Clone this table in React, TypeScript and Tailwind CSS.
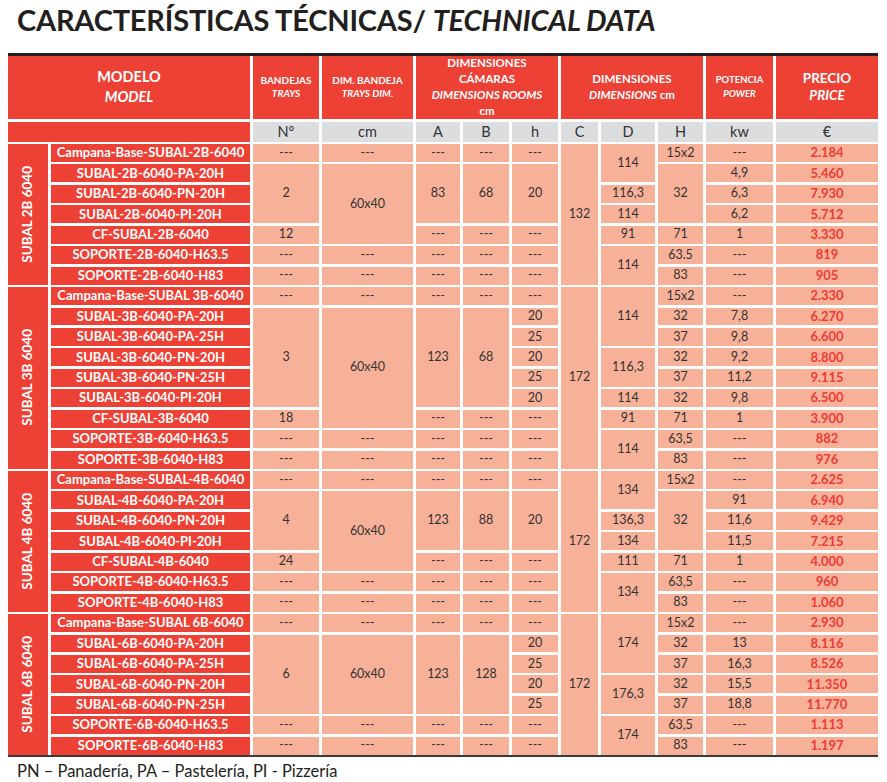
type Cell = string | [string, number]
type Row = { model: string; cells: Cell[]; price: string }
type Group = { label: string; rows: Row[] }

const d = '---'
const dash5: Cell[] = [d, d, d, d, d]

const groups: Group[] = [
  {
    label: 'SUBAL 2B 6040',
    rows: [
      { model: 'Campana-Base-SUBAL-2B-6040', cells: [...dash5, ['132', 7], ['114', 2], '15x2', d], price: '2.184' },
      { model: 'SUBAL-2B-6040-PA-20H', cells: [['2', 3], ['60x40', 4], ['83', 3], ['68', 3], ['20', 3], ['32', 3], '4,9'], price: '5.460' },
      { model: 'SUBAL-2B-6040-PN-20H', cells: ['116,3', '6,3'], price: '7.930' },
      { model: 'SUBAL-2B-6040-PI-20H', cells: ['114', '6,2'], price: '5.712' },
      { model: 'CF-SUBAL-2B-6040', cells: ['12', d, d, d, '91', '71', '1'], price: '3.330' },
      { model: 'SOPORTE-2B-6040-H63.5', cells: [...dash5, ['114', 2], '63.5', d], price: '819' },
      { model: 'SOPORTE-2B-6040-H83', cells: [...dash5, '83', d], price: '905' },
    ],
  },
  {
    label: 'SUBAL 3B 6040',
    rows: [
      { model: 'Campana-Base-SUBAL 3B-6040', cells: [...dash5, ['172', 9], ['114', 3], '15x2', d], price: '2.330' },
      { model: 'SUBAL-3B-6040-PA-20H', cells: [['3', 5], ['60x40', 6], ['123', 5], ['68', 5], '20', '32', '7,8'], price: '6.270' },
      { model: 'SUBAL-3B-6040-PA-25H', cells: ['25', '37', '9,8'], price: '6.600' },
      { model: 'SUBAL-3B-6040-PN-20H', cells: ['20', ['116,3', 2], '32', '9,2'], price: '8.800' },
      { model: 'SUBAL-3B-6040-PN-25H', cells: ['25', '37', '11,2'], price: '9.115' },
      { model: 'SUBAL-3B-6040-PI-20H', cells: ['20', '114', '32', '9,8'], price: '6.500' },
      { model: 'CF-SUBAL-3B-6040', cells: ['18', d, d, d, '91', '71', '1'], price: '3.900' },
      { model: 'SOPORTE-3B-6040-H63.5', cells: [...dash5, ['114', 2], '63,5', d], price: '882' },
      { model: 'SOPORTE-3B-6040-H83', cells: [...dash5, '83', d], price: '976' },
    ],
  },
  {
    label: 'SUBAL 4B 6040',
    rows: [
      { model: 'Campana-Base-SUBAL-4B-6040', cells: [...dash5, ['172', 7], ['134', 2], '15x2', d], price: '2.625' },
      { model: 'SUBAL-4B-6040-PA-20H', cells: [['4', 3], ['60x40', 4], ['123', 3], ['88', 3], ['20', 3], ['32', 3], '91'], price: '6.940' },
      { model: 'SUBAL-4B-6040-PN-20H', cells: ['136,3', '11,6'], price: '9.429' },
      { model: 'SUBAL-4B-6040-PI-20H', cells: ['134', '11,5'], price: '7.215' },
      { model: 'CF-SUBAL-4B-6040', cells: ['24', d, d, d, '111', '71', '1'], price: '4.000' },
      { model: 'SOPORTE-4B-6040-H63.5', cells: [...dash5, ['134', 2], '63,5', d], price: '960' },
      { model: 'SOPORTE-4B-6040-H83', cells: [...dash5, '83', d], price: '1.060' },
    ],
  },
  {
    label: 'SUBAL 6B 6040',
    rows: [
      { model: 'Campana-Base-SUBAL 6B-6040', cells: [...dash5, ['172', 7], ['174', 3], '15x2', d], price: '2.930' },
      { model: 'SUBAL-6B-6040-PA-20H', cells: [['6', 4], ['60x40', 4], ['123', 4], ['128', 4], '20', '32', '13'], price: '8.116' },
      { model: 'SUBAL-6B-6040-PA-25H', cells: ['25', '37', '16,3'], price: '8.526' },
      { model: 'SUBAL-6B-6040-PN-20H', cells: ['20', ['176,3', 2], '32', '15,5'], price: '11.350' },
      { model: 'SUBAL-6B-6040-PN-25H', cells: ['25', '37', '18,8'], price: '11.770' },
      { model: 'SOPORTE-6B-6040-H63.5', cells: [...dash5, ['174', 2], '63,5', d], price: '1.113' },
      { model: 'SOPORTE-6B-6040-H83', cells: [...dash5, '83', d], price: '1.197' },
    ],
  },
]

const span: Record<number, string> = {
  1: '',
  2: 'row-span-2',
  3: 'row-span-3',
  4: 'row-span-4',
  5: 'row-span-5',
  6: 'row-span-6',
  7: 'row-span-7',
  9: 'row-span-9',
}

const red = 'bg-[#ee4136] text-white font-bold'
const units = ['Nº', 'cm', 'A', 'B', 'h', 'C', 'D', 'H', 'kw', '€']

export default function App() {
  return (
    <div className="w-[887px] h-[782px] bg-white font-['Lato',sans-serif] text-[#231f20]">
      <h1 className="h-[52.5px] pl-[17px] text-[29px] leading-[40px] font-bold tracking-[-0.2px]">
        CARACTERÍSTICAS TÉCNICAS/ <i>TECHNICAL DATA</i>
      </h1>

      <div className="ml-[8px] w-[870px]">
        <div className="h-[3px] bg-[#231f20]" />

        <div className="grid grid-cols-[40px_199px_66px_91px_44px_46px_46px_37px_54px_45px_67px_102px] grid-rows-[63.5px_20px_repeat(30,17.94px)] gap-x-[3px] gap-y-[2.5px]">
          {/* header */}
          <div className={`${red} col-span-2 flex flex-col items-center justify-center text-[14.5px] leading-[20px]`}>
            <span>MODELO</span>
            <i>MODEL</i>
          </div>
          <div className={`${red} flex flex-col items-center justify-center text-[10px] leading-[13.5px]`}>
            <span>BANDEJAS</span>
            <i>TRAYS</i>
          </div>
          <div className={`${red} flex flex-col items-center justify-center text-[10px] leading-[13.5px]`}>
            <span>DIM. BANDEJA</span>
            <i>TRAYS DIM.</i>
          </div>
          <div className={`${red} col-span-3 flex flex-col items-center justify-center text-[11.5px] leading-[16px]`}>
            <span>DIMENSIONES</span>
            <span>CÁMARAS</span>
            <i>DIMENSIONS ROOMS</i>
            <span>cm</span>
          </div>
          <div className={`${red} col-span-3 flex flex-col items-center justify-center text-[11.5px] leading-[16px]`}>
            <span>DIMENSIONES</span>
            <span>
              <i>DIMENSIONS</i> cm
            </span>
          </div>
          <div className={`${red} flex flex-col items-center justify-center text-[9.5px] leading-[14px]`}>
            <span>POTENCIA</span>
            <i>POWER</i>
          </div>
          <div className={`${red} flex flex-col items-center justify-center text-[13.5px] leading-[17px]`}>
            <span>PRECIO</span>
            <i>PRICE</i>
          </div>

          {/* units */}
          <div className={`${red} col-span-2`} />
          {units.map(u => (
            <div key={u} className="bg-[#dcdddf] flex items-center justify-center text-[14.5px] text-[#333]">
              {u}
            </div>
          ))}

          {/* body */}
          {groups.map(g =>
            g.rows.map((r, i) => (
              <>
                {i === 0 && (
                  <div key={g.label} className={`${red} ${span[g.rows.length]} flex items-center justify-center`}>
                    <span className="[writing-mode:vertical-rl] rotate-180 text-[13.5px] leading-none">{g.label}</span>
                  </div>
                )}
                <div key={r.model} className={`${red} flex items-center justify-center text-[13px] whitespace-nowrap`}>
                  {r.model}
                </div>
                {r.cells.map((c, j) => {
                  const [text, n] = typeof c === 'string' ? [c, 1] : c
                  return (
                    <div
                      key={`${r.model}-${j}`}
                      className={`${span[n]} bg-[#f8b199] flex items-center justify-center text-[12.5px] text-[#333]`}
                    >
                      {text}
                    </div>
                  )
                })}
                <div className="bg-[#f8b199] flex items-center justify-center text-[13px] font-bold text-[#ee3b36]">
                  {r.price}
                </div>
              </>
            ))
          )}
        </div>

        <div className="h-[2px] bg-[#3a3a3a]" />
      </div>

      <p className="mt-[4px] pl-[17px] text-[16.5px] leading-[20px]">PN – Panadería, PA – Pastelería, PI - Pizzería</p>
    </div>
  )
}
